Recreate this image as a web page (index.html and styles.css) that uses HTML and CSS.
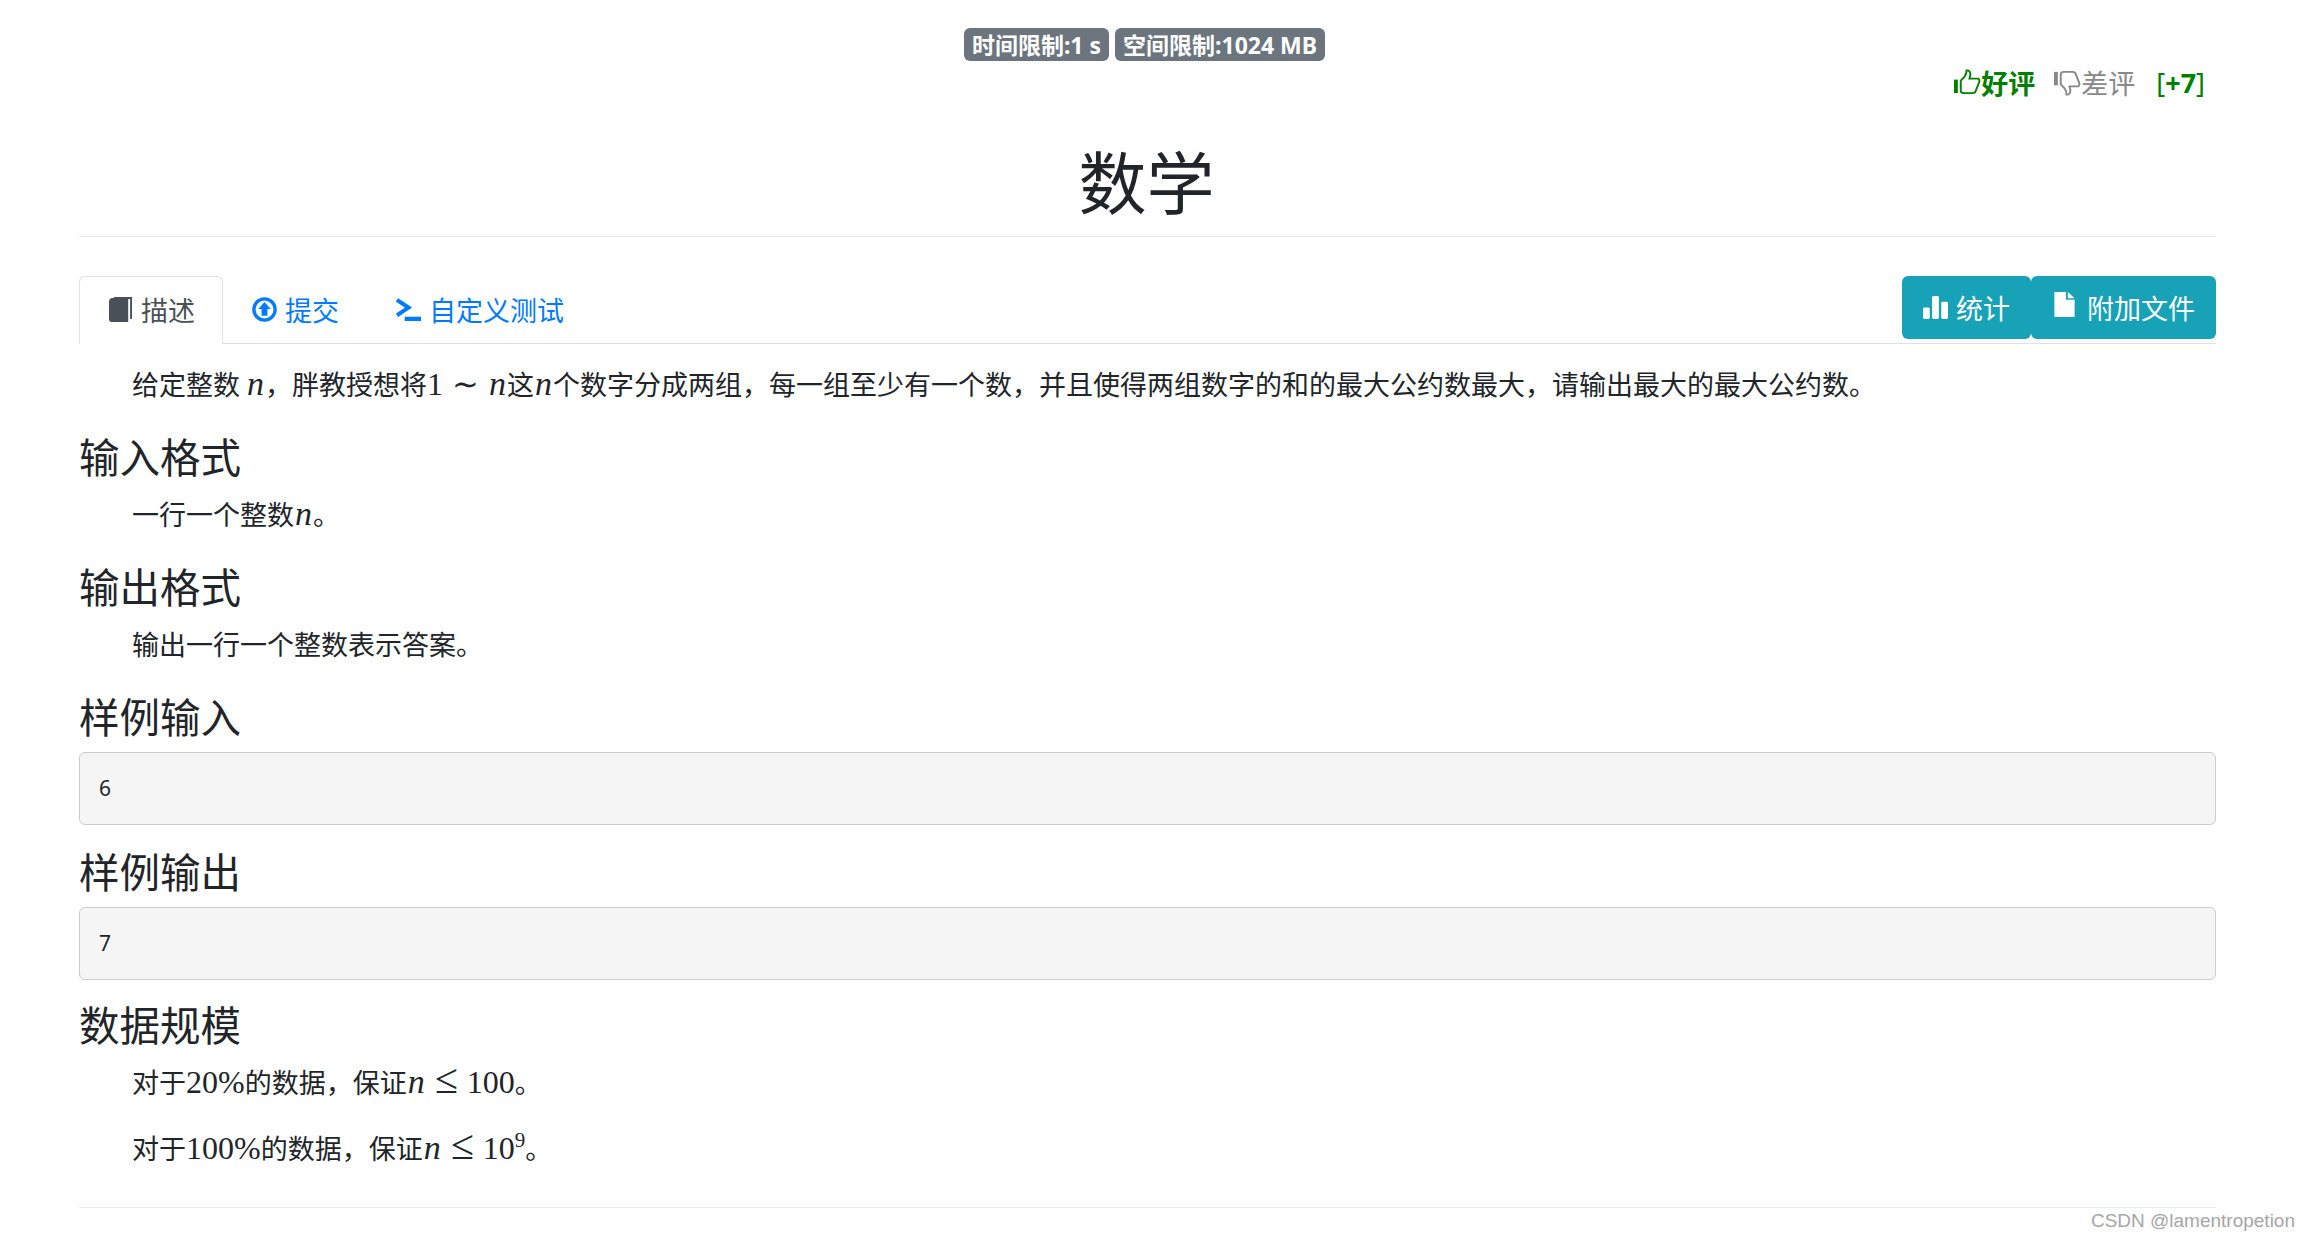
FILE: index.html
```html
<!DOCTYPE html>
<html lang="zh-CN">
<head>
  <meta charset="UTF-8" />
  <title>数学</title>
  <link rel="stylesheet" href="styles.css">
</head>
<body>
  <div class="container">
    <div class="limits">
      <span class="badge">时间限制:1 s</span>
      <span class="badge">空间限制:1024 MB</span>
    </div>
    <div class="rating">
      <a class="vote vote-up">
        <svg class="thumb" viewBox="0 0 28 28"><rect x="0" y="11" width="4" height="14" fill="#008000"/><path d="M7 12 L11 8 Q13 5 13 1.5 Q17 1 17 6 L16 10 H25 Q27 11 26 14 L22 24 Q21 25 19 25 H10 Q7 25 7 22 Z" fill="none" stroke="#008000" stroke-width="2"/></svg>好评</a>
      <a class="vote vote-down">
        <svg class="thumb" viewBox="0 0 28 28"><rect x="0" y="3" width="4" height="14" fill="#888"/><path d="M7 16 L11 20 Q13 23 13 26.5 Q17 27 17 22 L16 18 H25 Q27 17 26 14 L22 4 Q21 3 19 3 H10 Q7 3 7 6 Z" fill="none" stroke="#888" stroke-width="2"/></svg>差评</a>
      <span class="score">[<b>+7</b>]</span>
    </div>
    <h1>数学</h1>
    <hr>

    <div class="toolbar">
      <ul class="tabs">
        <li class="tab active">
          <svg class="icon" viewBox="0 0 24 26"><path d="M5 0 H24 V23 H22 V2 H6 Z M0 5 Q0 1 4 1 H20 V26 H3 Q0 26 0 23 Z" fill="#495057"/></svg>
          描述
        </li>
        <li class="tab">
          <svg class="icon" viewBox="0 0 24 24"><circle cx="12" cy="12" r="10.2" fill="none" stroke="#007bff" stroke-width="3.2"/><path d="M12 4.8 L18 11.5 H14.8 V18 H9.2 V11.5 H6 Z" fill="#007bff"/></svg>
          提交
        </li>
        <li class="tab">
          <svg class="icon" viewBox="0 0 26 24"><path d="M1 2 L13 10 L1 18" fill="none" stroke="#007bff" stroke-width="4.2"/><rect x="9" y="19.5" width="17" height="4.5" fill="#007bff"/></svg>
          自定义测试
        </li>
      </ul>
      <div class="btn-group">
        <a class="btn">
          <svg class="btn-icon" viewBox="0 0 26 26"><rect x="0" y="14" width="7" height="12" rx="1.5"/><rect x="9.5" y="2" width="7" height="24" rx="1.5"/><rect x="19" y="8" width="7" height="18" rx="1.5"/></svg>
          统计
        </a>
        <a class="btn btn-file">
          <svg class="btn-icon btn-icon-file" viewBox="0 0 21 26"><path d="M0 0 H12 V8 H21 V26 H0 Z M14 0 L21 6.5 H14 Z" fill="#fff"/></svg>
          附加文件
        </a>
      </div>
    </div>

    <div class="content">
      <p>给定整数 <i>n</i>，胖教授想将<span class="num">1</span><span class="op">∼</span><i>n</i>这<i>n</i>个数字分成两组，每一组至少有一个数，并且使得两组数字的和的最大公约数最大，请输出最大的最大公约数。</p>

      <h4>输入格式</h4>
      <p>一行一个整数<i>n</i>。</p>

      <h4>输出格式</h4>
      <p>输出一行一个整数表示答案。</p>

      <h4>样例输入</h4>
      <pre>6</pre>

      <h4>样例输出</h4>
      <pre>7</pre>

      <h4>数据规模</h4>
      <p class="note">对于<span class="num">20%</span>的数据，保证<i>n</i><span class="op op-le">≤</span><span class="num">100</span>。</p>
      <p class="note">对于<span class="num">100%</span>的数据，保证<i>n</i><span class="op op-le">≤</span><span class="num">10<sup>9</sup></span>。</p>
    </div>
    <hr class="end">
  </div>
  <div class="watermark">CSDN @lamentropetion</div>
</body>
</html>
```

FILE: styles.css
```css
html, body {
  height: 100%;
}
body {
  font-family: "Noto Sans", "Noto Sans CJK SC", sans-serif;
  font-size: 27px;
  color: #212529;
  background: #fff;
  margin: 0;
  overflow: hidden;
}
.container {
  margin: 0 93px 0 79px;
  padding-top: 28px;
}
.limits {
  display: flex;
  justify-content: center;
  gap: 6px;
  padding-right: 6px;
}
.badge {
  background: #6c757d;
  color: #fff;
  font-weight: 700;
  font-size: 23px;
  line-height: 35px;
  height: 33px;
  padding: 0 8px;
  border-radius: 6px;
  white-space: nowrap;
}
.rating {
  display: flex;
  justify-content: flex-end;
  align-items: center;
  height: 37px;
  margin-top: 3px;
  padding-right: 11px;
  font-family: "Noto Sans CJK SC", sans-serif;
  line-height: 37px;
}
.vote {
  display: flex;
  align-items: center;
  margin-right: 19px;
}
.vote-up {
  color: #008000;
  font-weight: 700;
}
.vote-down {
  color: #888;
  margin-right: 21px;
}
.thumb {
  width: 27px;
  height: 27px;
}
.score {
  color: #008000;
  font-family: "Noto Sans", sans-serif;
}
h1 {
  margin: 40px 0 0;
  text-align: center;
  font-size: 68px;
  font-weight: 400;
  line-height: 84px;
  padding-right: 2px;
}
hr {
  border: 0;
  border-top: 1px solid #e9ecef;
  margin: 11px 0 0;
}
.toolbar {
  display: flex;
  justify-content: space-between;
  align-items: flex-start;
  margin-top: 39px;
  border-bottom: 1px solid #dee2e6;
  height: 67px;
}
.tabs {
  display: flex;
  list-style: none;
  margin: 0;
  padding: 0;
}
.tab {
  display: flex;
  align-items: center;
  gap: 8px;
  height: 68px;
  box-sizing: border-box;
  padding: 0 27px 2px 28px;
  color: #007bff;
  border: 1px solid transparent;
  border-bottom: 0;
  border-radius: 6px 6px 0 0;
}
.tab.active {
  color: #495057;
  border-color: #dee2e6;
  background: #fff;
}
.icon {
  width: 25px;
  height: 25px;
}
.btn-group {
  display: flex;
}
.btn {
  display: flex;
  align-items: center;
  gap: 8px;
  height: 63px;
  padding: 0 21px;
  background: #17a2b8;
  color: #fff;
  border-radius: 6px;
}
.btn-file {
  gap: 12px;
  padding-left: 23px;
}
.btn-icon {
  width: 25px;
  height: 25px;
  fill: #fff;
  margin-top: -2px;
}
.btn-icon-file {
  width: 21px;
  margin-top: -6px;
}
.content {
  padding-top: 17px;
}
p {
  margin: 0 0 31px;
  padding-top: 4px;
  line-height: 38px;
  text-indent: 53px;
  font-family: "Noto Sans CJK SC", sans-serif;
  white-space: nowrap;
}
p.note {
  margin-bottom: 24px;
}
p.note + p.note {
  margin-bottom: 0;
}
i, .num, .op {
  font-family: "Liberation Serif", serif;
  font-size: 32px;
  line-height: 0;
}
i {
  font-size: 34px;
  padding: 0 1px;
}
.op {
  margin: 0 9px;
}
.op-le {
  font-size: 42px;
}
sup {
  font-size: 21px;
  line-height: 0;
}
h4 {
  margin: 0 0 13px;
  font-size: 40.5px;
  font-weight: 400;
  line-height: 44px;
  font-family: "Noto Sans CJK SC", sans-serif;
}
pre {
  margin: 14px 0 24px;
  height: 73px;
  box-sizing: border-box;
  padding: 0 19px;
  background: #f5f5f5;
  border: 1px solid #ccc;
  border-radius: 6px;
  font-family: "Noto Sans", sans-serif;
  font-size: 21px;
  line-height: 71px;
}
pre + h4 + pre {
  margin-bottom: 22px;
}
hr.end {
  margin-top: 40px;
}
.watermark {
  position: absolute;
  right: 14px;
  top: 1209px;
  font-family: "Liberation Sans", sans-serif;
  font-size: 19px;
  line-height: 24px;
  color: #a6a6a6;
}
```
